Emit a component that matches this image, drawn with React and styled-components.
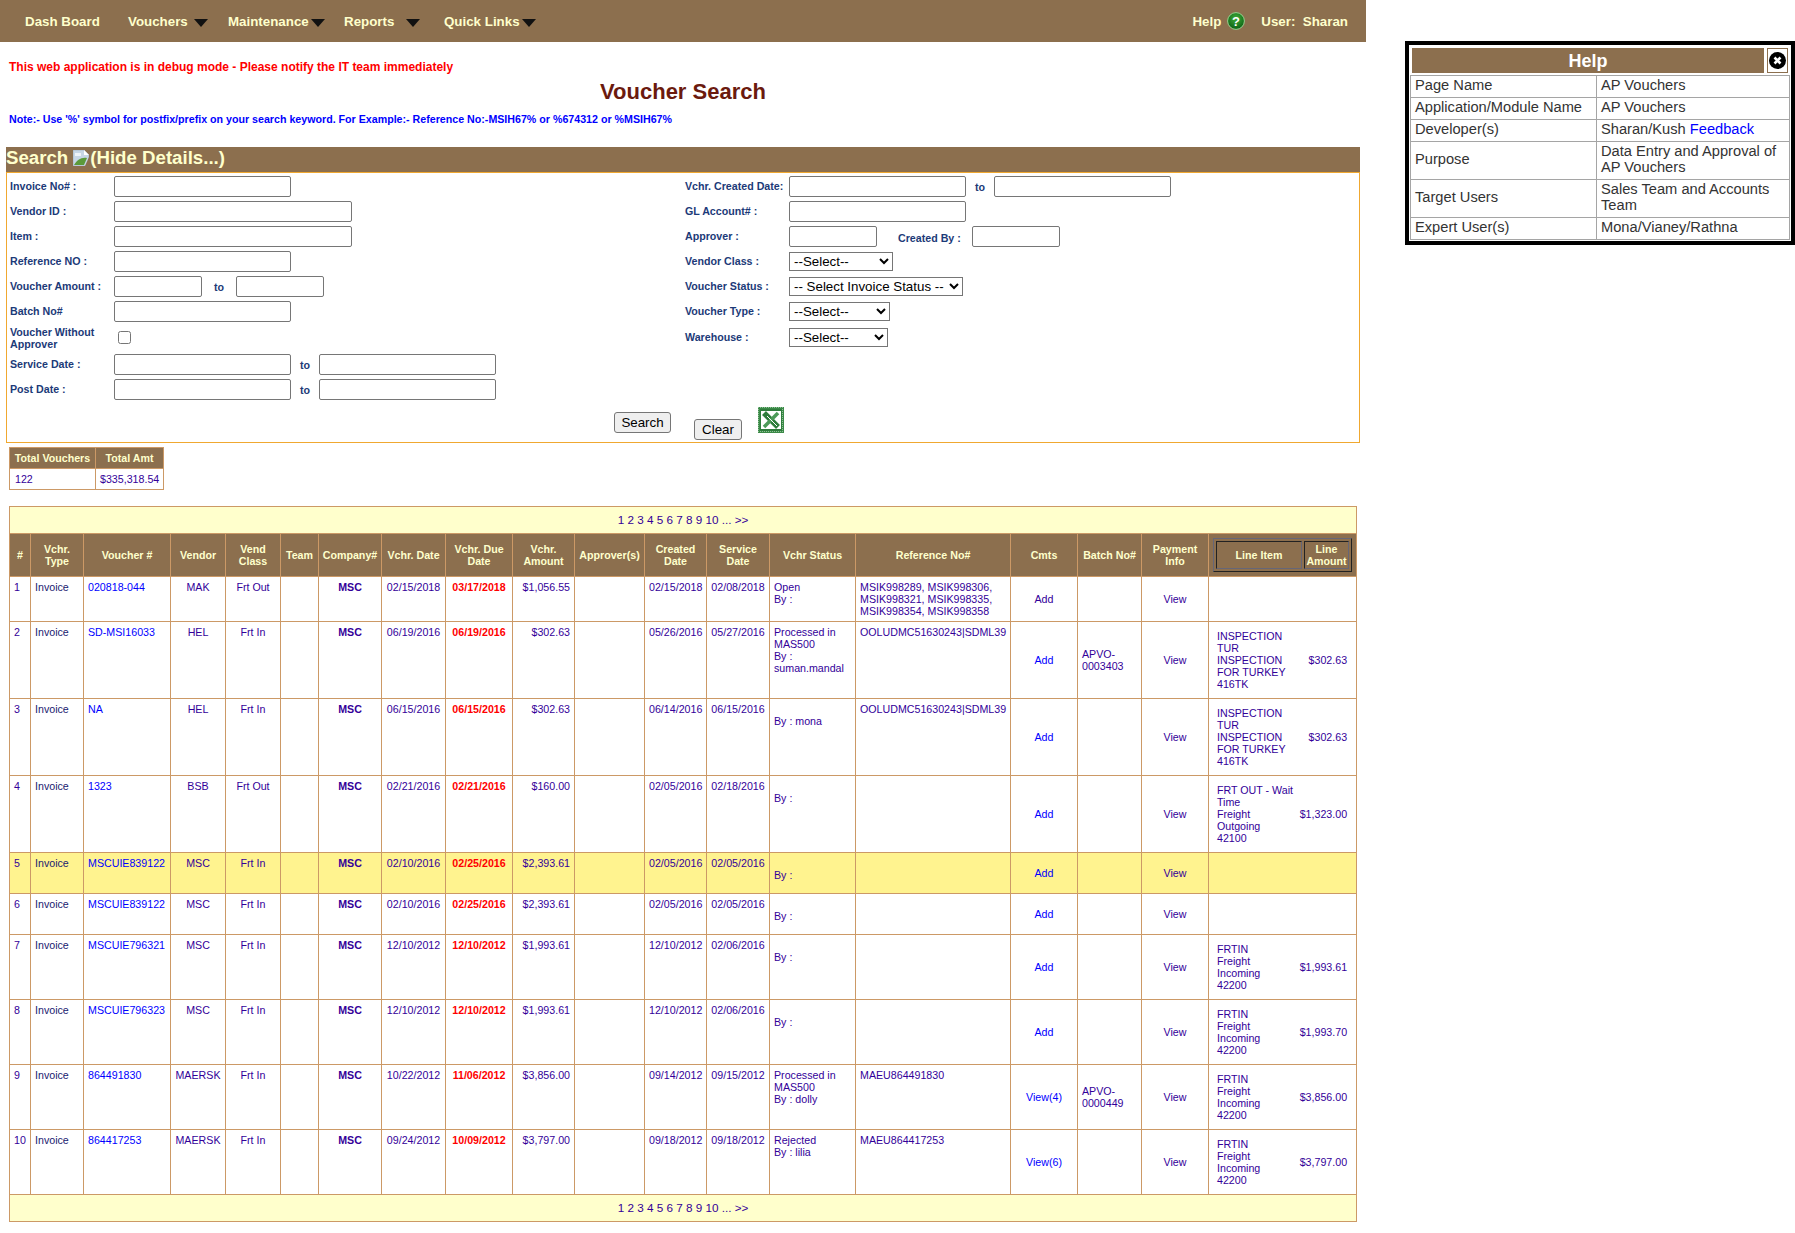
import styled, { createGlobalStyle } from "styled-components";

const BROWN = "#8c6f4e";
const CREAM = "#ffffcc";
const LINE = "#cc9966";
const INK = "#330099";

const GlobalStyle = createGlobalStyle`
  html, body {
    margin: 0;
    padding: 0;
    background: #fff;
    font-family: "Liberation Sans", Arial, sans-serif;
  }
`;

const Page = styled.div`
  display: flex;
  align-items: flex-start;
  width: 1795px;
`;

const Main = styled.div`
  width: 1366px;
  flex: none;
`;

const Nav = styled.nav`
  height: 42px;
  background: ${BROWN};
  color: ${CREAM};
  display: flex;
  align-items: center;
  justify-content: space-between;
  padding: 0 18px 0 25px;
  font-size: 13.33px;
  font-weight: bold;
`;

const NavLeft = styled.div`
  display: flex;
  align-items: center;
`;

const NavItem = styled.a`
  display: flex;
  align-items: center;
  gap: ${(p) => p.$caretGap || 0}px;
  width: ${(p) => p.$w}px;
`;

const Caret = styled.span`
  width: 0;
  height: 0;
  margin-top: 3px;
  border-left: 7px solid transparent;
  border-right: 7px solid transparent;
  border-top: 8px solid #111;
`;

const NavRight = styled.div`
  display: flex;
  align-items: center;
`;

const HelpLink = styled.span`
  display: flex;
  align-items: center;
  gap: 6px;
  margin-right: 16px;
`;

const Debug = styled.div`
  margin: 18px 0 0 9px;
  color: #ff0000;
  font-size: 12px;
  font-weight: bold;
  line-height: 14px;
`;

const Title = styled.h1`
  margin: 5px 0 0;
  text-align: center;
  color: #6b1a0e;
  font-size: 22px;
  font-weight: bold;
  line-height: 26px;
`;

const Note = styled.div`
  margin: 8px 0 0 9px;
  color: #0000ff;
  font-size: 10.67px;
  font-weight: bold;
  line-height: 12px;
`;

const SearchBox = styled.section`
  margin: 22px 6px 0;
`;

const SearchBar = styled.h2`
  margin: 0;
  height: 25px;
  padding-bottom: 3px;
  box-sizing: border-box;
  background: ${BROWN};
  color: ${CREAM};
  font-size: 18.67px;
  font-weight: bold;
  line-height: 22px;
  display: flex;
  align-items: center;
`;

const SearchBody = styled.div`
  border: 1px solid #f0a830;
  height: 271px;
  box-sizing: border-box;
  padding-top: 1px;
`;

const Fields = styled.div`
  display: grid;
  grid-template-columns: 678px 1fr;
`;

const FieldCol = styled.div`
  display: flex;
  flex-direction: column;
  padding-left: ${(p) => p.$pad}px;
`;

const Row = styled.div`
  display: flex;
  align-items: center;
  height: ${(p) => p.$h || 25}px;
`;

const Label = styled.label`
  width: 104px;
  flex: none;
  margin-bottom: ${(p) => (p.$flush ? 0 : 2)}px;
  color: #1c3a78;
  font-size: 10.67px;
  font-weight: bold;
  line-height: 12px;
`;

const InlineLabel = styled(Label)`
  width: auto;
  margin: 2px 11px 0 21px;
`;

const TextInput = styled.input`
  width: ${(p) => p.$w}px;
  height: 21px;
  box-sizing: border-box;
  border: 1px solid #767676;
  border-radius: 2px;
  padding: 1px 2px;
  background: #fff;
`;

const To = styled.span`
  width: ${(p) => p.$w}px;
  text-align: center;
  color: #1c3a78;
  font-size: 10.67px;
  font-weight: bold;
  padding-top: 1px;
  flex: none;
`;

const Check = styled.input`
  width: 13px;
  height: 13px;
  margin: 0 0 1px 4px;
`;

const Select = styled.select`
  width: ${(p) => p.$w}px;
  height: 19px;
  box-sizing: border-box;
  border: 1px solid #767676;
  border-radius: 0;
  background: #fff;
  color: #000;
  font-family: "Liberation Sans", Arial, sans-serif;
  font-size: 13.33px;
`;

const Actions = styled.div`
  display: flex;
  align-items: flex-start;
  justify-content: center;
  padding: 5px 0 0 32px;
`;

const Button = styled.button`
  height: 21px;
  width: ${(p) => p.$w}px;
  margin: ${(p) => p.$top || 0}px ${(p) => p.$right || 0}px 0 0;
  box-sizing: border-box;
  border: 1px solid #767676;
  border-radius: 3px;
  background: #efefef;
  color: #000;
  padding: 0;
  font-family: "Liberation Sans", Arial, sans-serif;
  font-size: 13.33px;
`;

const Summary = styled.table`
  margin: 4px 0 0 9px;
  width: 154px;
  border-collapse: collapse;
  table-layout: fixed;
  font-size: 10.67px;
`;

const SummaryHead = styled.th`
  height: 21px;
  padding: 0;
  box-sizing: border-box;
  border: 1px solid ${LINE};
  background: ${BROWN};
  color: ${CREAM};
  font-weight: bold;
  width: ${(p) => p.$w}px;
`;

const SummaryCell = styled.td`
  height: 21px;
  padding: 0 0 0 ${(p) => p.$pad}px;
  box-sizing: border-box;
  border: 1px solid ${LINE};
  color: ${INK};
`;

const Grid = styled.table`
  margin: 16px 0 0 9px;
  width: 1347px;
  border-collapse: collapse;
  table-layout: fixed;
  font-size: 10.67px;
  line-height: 12px;
  color: ${INK};
`;

const Pager = styled.td`
  height: 26px;
  padding: 0;
  border: 1px solid ${LINE};
  background: ${CREAM};
  font-size: 11.7px;
  text-align: center;
`;

const Head = styled.th`
  height: 42px;
  padding: 0 2px;
  border: 1px solid ${LINE};
  background: ${BROWN};
  color: ${CREAM};
  font-weight: bold;
  text-align: center;
  vertical-align: middle;
`;

const LineHeadBox = styled.div`
  display: flex;
  gap: 2px;
  margin: 0 2px;
  padding: 2px;
  height: 34px;
  box-sizing: border-box;
  border: 1px solid;
  border-color: #667 #222 #222 #667;
`;

const LineHeadCell = styled.div`
  width: ${(p) => p.$w}px;
  display: flex;
  align-items: center;
  justify-content: center;
  box-sizing: border-box;
  border: 1px solid;
  border-color: #222 #667 #667 #222;
`;

const BodyRow = styled.tr`
  height: ${(p) => p.$h}px;
  background: ${(p) => (p.$hot ? "#fff38f" : "#fff")};
`;

const Cell = styled.td`
  padding: ${(p) => (p.$mid ? "0 4px" : "4px 4px 0")};
  border: 1px solid ${LINE};
  text-align: ${(p) => p.$align || "left"};
  vertical-align: ${(p) => (p.$mid ? "middle" : "top")};
  font-weight: ${(p) => (p.$bold ? "bold" : "normal")};
  color: ${(p) => p.$color || "inherit"};
  white-space: nowrap;
`;

const LineCell = styled.div`
  display: flex;
  align-items: center;
  justify-content: space-between;
  padding: 0 5px 0 4px;
`;

const Lines = ({ items }) => items.map((t, i) => <div key={i}>{t || "\u00a0"}</div>);

const HelpPanel = styled.aside`
  flex: none;
  width: 390px;
  height: 204px;
  margin: 41px 0 0 39px;
  box-sizing: border-box;
  border: 4px solid #000;
  padding: 3px 1px 0;
  background: #fff;
`;

const HelpTop = styled.div`
  display: flex;
  gap: 3px;
  height: 25px;
  padding: 0 2px;
`;

const HelpTitle = styled.div`
  width: 352px;
  background: ${BROWN};
  color: #fff;
  font-size: 18px;
  font-weight: bold;
  line-height: 26px;
  text-align: center;
`;

const CloseBox = styled.button`
  width: 21px;
  height: 25px;
  padding: 0;
  box-sizing: border-box;
  border: 1px solid ${BROWN};
  background: #fff;
  display: flex;
  align-items: center;
  justify-content: center;
`;

const HelpTable = styled.table`
  margin-top: 2px;
  width: 380px;
  border-collapse: collapse;
  table-layout: fixed;
  font-size: 14.67px;
  line-height: 16px;
  color: #333;
`;

const HelpCell = styled.td`
  height: ${(p) => p.$h}px;
  width: ${(p) => p.$w}px;
  padding: 0 3px 3px 4px;
  box-sizing: border-box;
  border: 1px solid #a5a5a5;
`;

const Feedback = styled.a`
  color: #0000ff;
`;

const BrokenWrap = styled.span`
  display: flex;
  margin: 0 1px 0 5px;
`;

// small drawings
const BrokenImage = () => (
  <BrokenWrap>
    <svg width="16" height="16" viewBox="0 0 16 16">
      <path d="M0 0h11l5 5v11H0z" fill="#c7d6e6" stroke="#9aa7b5" strokeWidth="0.6" />
      <path d="M11 0v5h5z" fill="#fff" />
      <path d="M1 15c3-5 7-8 13-7l-3 7z" fill="#5b9a3a" />
      <path d="M2 3h6v3H2z" fill="#fff" opacity="0.7" />
      <path d="M16 7l-4 9h4z" fill={BROWN} />
    </svg>
  </BrokenWrap>
);

const HelpIcon = () => (
  <svg width="18" height="18" viewBox="0 0 18 18">
    <defs>
      <radialGradient id="helpGreen" cx="50%" cy="35%" r="65%">
        <stop offset="0%" stopColor="#3fae3a" />
        <stop offset="100%" stopColor="#0b5f14" />
      </radialGradient>
    </defs>
    <circle cx="9" cy="9" r="8.4" fill="url(#helpGreen)" stroke="#9ad08f" strokeWidth="1" />
    <text x="9" y="13.5" textAnchor="middle" fontSize="13" fontWeight="bold" fill="#fff" fontFamily="Liberation Sans">?</text>
  </svg>
);

const ExcelIcon = () => (
  <svg width="26" height="26" viewBox="0 0 26 26">
    <defs>
      <pattern id="xlDither" width="2" height="2" patternUnits="userSpaceOnUse">
        <rect width="2" height="2" fill="#3c8a48" />
        <rect width="1" height="1" fill="#8fc196" />
      </pattern>
    </defs>
    <rect width="26" height="26" fill="url(#xlDither)" />
    <rect x="2" y="2" width="22" height="22" fill="#2f7d3c" />
    <rect x="3" y="4" width="20" height="18" fill="#fff" />
    <path d="M6 6l14 14" stroke="#2f7d3c" strokeWidth="5.5" />
    <path d="M20 6L6 20" stroke="#4c9a58" strokeWidth="3.5" />
    <path d="M9 9l10 10" stroke="#fff" strokeWidth="1" />
  </svg>
);

const CloseIcon = () => (
  <svg width="17" height="17" viewBox="0 0 17 17">
    <circle cx="8.5" cy="8.5" r="8.5" fill="#000" />
    <path d="M5.5 5.5l6 6M11.5 5.5l-6 6" stroke="#fff" strokeWidth="2.6" />
  </svg>
);

const COLS = [21, 53, 87, 55, 55, 38, 63, 64, 67, 62, 70, 62, 63, 86, 155, 67, 64, 67, 148];

const Col = styled.col`
  width: ${(p) => p.$w}px;
`;

const HEADS = [
  ["#"], ["Vchr.", "Type"], ["Voucher #"], ["Vendor"], ["Vend", "Class"], ["Team"], ["Company#"],
  ["Vchr. Date"], ["Vchr. Due", "Date"], ["Vchr.", "Amount"], ["Approver(s)"], ["Created", "Date"],
  ["Service", "Date"], ["Vchr Status"], ["Reference No#"], ["Cmts"], ["Batch No#"], ["Payment", "Info"],
];

const FRTIN = ["FRTIN", "Freight", "Incoming", "42200"];
const INSPECT = ["INSPECTION", "TUR", "INSPECTION", "FOR TURKEY", "416TK"];

const ROWS = [
  { n: 1, h: 45, no: "020818-044", vendor: "MAK", cls: "Frt Out", date: "02/15/2018", due: "03/17/2018", amt: "$1,056.55", created: "02/15/2018", service: "02/08/2018", status: ["Open", "By :"], ref: ["MSIK998289, MSIK998306,", "MSIK998321, MSIK998335,", "MSIK998354, MSIK998358"], cmt: "Add", cmtInk: true },
  { n: 2, h: 77, no: "SD-MSI16033", vendor: "HEL", cls: "Frt In", date: "06/19/2016", due: "06/19/2016", amt: "$302.63", created: "05/26/2016", service: "05/27/2016", status: ["Processed in", "MAS500", "By :", "suman.mandal"], ref: ["OOLUDMC51630243|SDML39"], cmt: "Add", batch: ["APVO-", "0003403"], line: INSPECT, lineAmt: "$302.63" },
  { n: 3, h: 77, no: "NA", vendor: "HEL", cls: "Frt In", date: "06/15/2016", due: "06/15/2016", amt: "$302.63", created: "06/14/2016", service: "06/15/2016", status: ["", "By : mona"], ref: ["OOLUDMC51630243|SDML39"], cmt: "Add", line: INSPECT, lineAmt: "$302.63" },
  { n: 4, h: 77, no: "1323", vendor: "BSB", cls: "Frt Out", date: "02/21/2016", due: "02/21/2016", amt: "$160.00", created: "02/05/2016", service: "02/18/2016", status: ["", "By :"], ref: [], cmt: "Add", line: ["FRT OUT - Wait", "Time", "Freight", "Outgoing", "42100"], lineAmt: "$1,323.00" },
  { n: 5, h: 41, hot: true, no: "MSCUIE839122", vendor: "MSC", cls: "Frt In", date: "02/10/2016", due: "02/25/2016", amt: "$2,393.61", created: "02/05/2016", service: "02/05/2016", status: ["", "By :"], ref: [], cmt: "Add" },
  { n: 6, h: 41, no: "MSCUIE839122", vendor: "MSC", cls: "Frt In", date: "02/10/2016", due: "02/25/2016", amt: "$2,393.61", created: "02/05/2016", service: "02/05/2016", status: ["", "By :"], ref: [], cmt: "Add" },
  { n: 7, h: 65, no: "MSCUIE796321", vendor: "MSC", cls: "Frt In", date: "12/10/2012", due: "12/10/2012", amt: "$1,993.61", created: "12/10/2012", service: "02/06/2016", status: ["", "By :"], ref: [], cmt: "Add", line: FRTIN, lineAmt: "$1,993.61" },
  { n: 8, h: 65, no: "MSCUIE796323", vendor: "MSC", cls: "Frt In", date: "12/10/2012", due: "12/10/2012", amt: "$1,993.61", created: "12/10/2012", service: "02/06/2016", status: ["", "By :"], ref: [], cmt: "Add", line: FRTIN, lineAmt: "$1,993.70" },
  { n: 9, h: 65, no: "864491830", vendor: "MAERSK", cls: "Frt In", date: "10/22/2012", due: "11/06/2012", amt: "$3,856.00", created: "09/14/2012", service: "09/15/2012", status: ["Processed in", "MAS500", "By : dolly"], ref: ["MAEU864491830"], cmt: "View(4)", batch: ["APVO-", "0000449"], line: FRTIN, lineAmt: "$3,856.00" },
  { n: 10, h: 65, no: "864417253", vendor: "MAERSK", cls: "Frt In", date: "09/24/2012", due: "10/09/2012", amt: "$3,797.00", created: "09/18/2012", service: "09/18/2012", status: ["Rejected", "By : lilia"], ref: ["MAEU864417253"], cmt: "View(6)", line: FRTIN, lineAmt: "$3,797.00" },
];

const HELP_ROWS = [
  ["Page Name", "AP Vouchers", 22],
  ["Application/Module Name", "AP Vouchers", 22],
  ["Developer(s)", <>Sharan/Kush <Feedback>Feedback</Feedback></>, 22],
  ["Purpose", "Data Entry and Approval of AP Vouchers", 38],
  ["Target Users", "Sales Team and Accounts Team", 38],
  ["Expert User(s)", "Mona/Vianey/Rathna", 22],
];

const PAGER = "1 2 3 4 5 6 7 8 9 10 ... >>";

const App = () => (
  <>
    <GlobalStyle />
    <Page>
      <Main>
        <Nav>
          <NavLeft>
            <NavItem $w={103}>Dash Board</NavItem>
            <NavItem $w={100} $caretGap={6}>Vouchers<Caret /></NavItem>
            <NavItem $w={116} $caretGap={2}>Maintenance<Caret /></NavItem>
            <NavItem $w={100} $caretGap={12}>Reports<Caret /></NavItem>
            <NavItem $w={92} $caretGap={2}>Quick Links<Caret /></NavItem>
          </NavLeft>
          <NavRight>
            <HelpLink>Help <HelpIcon /></HelpLink>
            <span>User:&nbsp;&nbsp;Sharan</span>
          </NavRight>
        </Nav>

        <Debug>This web application is in debug mode - Please notify the IT team immediately</Debug>
        <Title>Voucher Search</Title>
        <Note>Note:- Use '%' symbol for postfix/prefix on your search keyword. For Example:- Reference No:-MSIH67% or %674312 or %MSIH67%</Note>

        <SearchBox>
          <SearchBar>Search<BrokenImage />(Hide Details...)</SearchBar>
          <SearchBody>
            <Fields>
              <FieldCol $pad={3}>
                <Row><Label>Invoice No# :</Label><TextInput $w={177} /></Row>
                <Row><Label>Vendor ID :</Label><TextInput $w={238} /></Row>
                <Row><Label>Item :</Label><TextInput $w={238} /></Row>
                <Row><Label>Reference NO :</Label><TextInput $w={177} /></Row>
                <Row><Label>Voucher Amount :</Label><TextInput $w={88} /><To $w={34}>to</To><TextInput $w={88} /></Row>
                <Row><Label>Batch No#</Label><TextInput $w={177} /></Row>
                <Row $h={28}><Label $flush>Voucher Without Approver</Label><Check type="checkbox" /></Row>
                <Row><Label>Service Date :</Label><TextInput $w={177} /><To $w={28}>to</To><TextInput $w={177} /></Row>
                <Row><Label>Post Date :</Label><TextInput $w={177} /><To $w={28}>to</To><TextInput $w={177} /></Row>
              </FieldCol>
              <FieldCol $pad={0}>
                <Row><Label>Vchr. Created Date:</Label><TextInput $w={177} /><To $w={28}>to</To><TextInput $w={177} /></Row>
                <Row><Label>GL Account# :</Label><TextInput $w={177} /></Row>
                <Row><Label>Approver :</Label><TextInput $w={88} /><InlineLabel>Created By :</InlineLabel><TextInput $w={88} /></Row>
                <Row><Label>Vendor Class :</Label><Select $w={104}><option>--Select--</option></Select></Row>
                <Row><Label>Voucher Status :</Label><Select $w={174}><option>-- Select Invoice Status --</option></Select></Row>
                <Row><Label>Voucher Type :</Label><Select $w={101}><option>--Select--</option></Select></Row>
                <Row $h={26}><Label $flush>Warehouse :</Label><Select $w={99}><option>--Select--</option></Select></Row>
              </FieldCol>
            </Fields>
            <Actions>
              <Button $w={57} $top={5} $right={23}>Search</Button>
              <Button $w={48} $top={12} $right={16}>Clear</Button>
              <ExcelIcon />
            </Actions>
          </SearchBody>
        </SearchBox>

        <Summary>
          <thead>
            <tr>
              <SummaryHead $w={86}>Total Vouchers</SummaryHead>
              <SummaryHead $w={68}>Total Amt</SummaryHead>
            </tr>
          </thead>
          <tbody>
            <tr>
              <SummaryCell $pad={5}>122</SummaryCell>
              <SummaryCell $pad={4}>$335,318.54</SummaryCell>
            </tr>
          </tbody>
        </Summary>

        <Grid>
          <colgroup>
            {COLS.map((w, i) => <Col key={i} $w={w} />)}
          </colgroup>
          <tbody>
            <tr><Pager colSpan={19}>{PAGER}</Pager></tr>
            <tr>
              {HEADS.map((h, i) => <Head key={i}><Lines items={h} /></Head>)}
              <Head>
                <LineHeadBox>
                  <LineHeadCell $w={86}>Line Item</LineHeadCell>
                  <LineHeadCell $w={45}><div><Lines items={["Line", "Amount"]} /></div></LineHeadCell>
                </LineHeadBox>
              </Head>
            </tr>
            {ROWS.map((r) => (
              <BodyRow key={r.n} $h={r.h} $hot={r.hot}>
                <Cell>{r.n}</Cell>
                <Cell $color="#1a1a70">Invoice</Cell>
                <Cell $color="#0000ff">{r.no}</Cell>
                <Cell $align="center">{r.vendor}</Cell>
                <Cell $align="center">{r.cls}</Cell>
                <Cell />
                <Cell $align="center" $bold>MSC</Cell>
                <Cell $align="center">{r.date}</Cell>
                <Cell $align="center" $bold $color="#ff0000">{r.due}</Cell>
                <Cell $align="right">{r.amt}</Cell>
                <Cell />
                <Cell $align="center">{r.created}</Cell>
                <Cell $align="center">{r.service}</Cell>
                <Cell><Lines items={r.status} /></Cell>
                <Cell><Lines items={r.ref} /></Cell>
                <Cell $mid $align="center" $color={r.cmtInk ? INK : "#0000ff"}>{r.cmt}</Cell>
                <Cell $mid>{r.batch && <Lines items={r.batch} />}</Cell>
                <Cell $mid $align="center">View</Cell>
                <Cell $mid>
                  {r.line && (
                    <LineCell>
                      <div><Lines items={r.line} /></div>
                      <div>{r.lineAmt}</div>
                    </LineCell>
                  )}
                </Cell>
              </BodyRow>
            ))}
            <tr><Pager colSpan={19}>{PAGER}</Pager></tr>
          </tbody>
        </Grid>
      </Main>

      <HelpPanel>
        <HelpTop>
          <HelpTitle>Help</HelpTitle>
          <CloseBox aria-label="Close"><CloseIcon /></CloseBox>
        </HelpTop>
        <HelpTable>
          <tbody>
            {HELP_ROWS.map(([k, v, h]) => (
              <tr key={k}>
                <HelpCell $h={h} $w={186}>{k}</HelpCell>
                <HelpCell $h={h}>{v}</HelpCell>
              </tr>
            ))}
          </tbody>
        </HelpTable>
      </HelpPanel>
    </Page>
  </>
);

export default App;
